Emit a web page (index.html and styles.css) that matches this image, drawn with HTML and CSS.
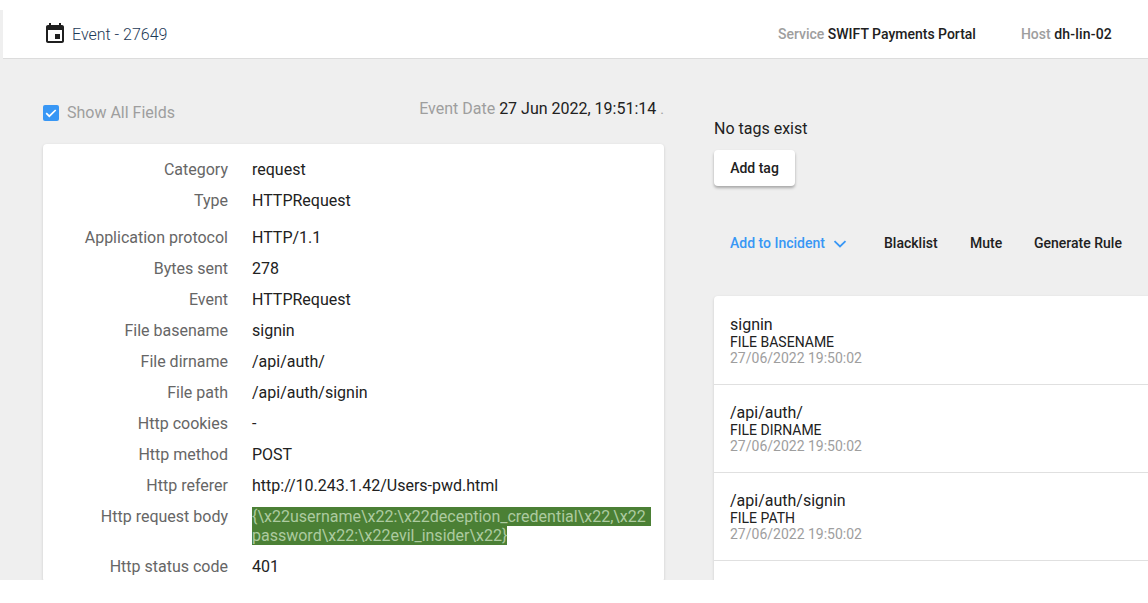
FILE: index.html
```html
<!DOCTYPE html>
<html lang="en">
<head>
    <meta charset="UTF-8">
    <title>Event - 27649</title>
    <link rel="stylesheet" href="styles.css">
</head>
<body>
    <div class="page">
        <header class="header">
            <div class="title">
                <svg class="title-icon" width="24" height="24" viewBox="0 0 24 24"><path fill="#1f1f1f" d="M17 12h-5v5h5v-5zM16 1v2H8V1H6v2H5c-1.11 0-1.99.9-1.99 2L3 19c0 1.1.89 2 2 2h14c1.1 0 2-.9 2-2V5c0-1.1-.9-2-2-2h-1V1h-2zm3 18H5V8h14v11z"/></svg>
                <span>Event - 27649</span>
            </div>
            <div class="meta">
                <span class="meta-item"><span class="muted">Service</span> SWIFT Payments Portal</span>
                <span class="meta-item"><span class="muted">Host</span> <span class="host-name">dh-lin-02</span></span>
            </div>
        </header>

        <main class="content">
            <section class="left">
                <div class="toolbar">
                    <label class="show-all">
                        <span class="checkbox">
                            <svg width="16" height="16" viewBox="0 0 16 16"><path fill="none" stroke="#fff" stroke-width="1.7" d="M3.2 8.2l3.1 3 6.4-6.2"/></svg>
                        </span>
                        Show All Fields
                    </label>
                    <div class="event-date"><span class="muted">Event Date</span> 27 Jun 2022, 19:51:14 <span class="muted dot">.</span></div>
                </div>

                <div class="card fields">
                    <div class="row"><div class="label">Category</div><div class="value">request</div></div>
                    <div class="row row-gap"><div class="label">Type</div><div class="value">HTTPRequest</div></div>
                    <div class="row"><div class="label">Application protocol</div><div class="value">HTTP/1.1</div></div>
                    <div class="row"><div class="label">Bytes sent</div><div class="value">278</div></div>
                    <div class="row"><div class="label">Event</div><div class="value">HTTPRequest</div></div>
                    <div class="row"><div class="label">File basename</div><div class="value">signin</div></div>
                    <div class="row"><div class="label">File dirname</div><div class="value">/api/auth/</div></div>
                    <div class="row"><div class="label">File path</div><div class="value">/api/auth/signin</div></div>
                    <div class="row"><div class="label">Http cookies</div><div class="value">-</div></div>
                    <div class="row"><div class="label">Http method</div><div class="value">POST</div></div>
                    <div class="row"><div class="label">Http referer</div><div class="value">http://10.243.1.42/Users-pwd.html</div></div>
                    <div class="row">
                        <div class="label">Http request body</div>
                        <div class="value">
                            <span class="highlight highlight-first">{\x22username\x22:\x22deception_credential\x22,\x22</span>
                            <span class="highlight">password\x22:\x22evil_insider\x22}</span>
                        </div>
                    </div>
                    <div class="row"><div class="label">Http status code</div><div class="value">401</div></div>
                </div>
            </section>

            <section class="right">
                <p class="no-tags">No tags exist</p>
                <button class="btn-tag">Add tag</button>

                <div class="actions">
                    <a class="action action-primary" href="#">Add to Incident
                        <svg width="14" height="8" viewBox="0 0 14 8"><path fill="none" stroke="#3897f5" stroke-width="1.8" d="M1.5 1.2L7 6.5l5.5-5.3"/></svg>
                    </a>
                    <a class="action action-blacklist" href="#">Blacklist</a>
                    <a class="action action-mute" href="#">Mute</a>
                    <a class="action" href="#">Generate Rule</a>
                </div>

                <div class="card indicators">
                    <div class="indicator">
                        <div class="ind-value">signin</div>
                        <div class="ind-type">FILE BASENAME</div>
                        <div class="ind-date">27/06/2022 19:50:02</div>
                    </div>
                    <div class="indicator">
                        <div class="ind-value">/api/auth/</div>
                        <div class="ind-type">FILE DIRNAME</div>
                        <div class="ind-date">27/06/2022 19:50:02</div>
                    </div>
                    <div class="indicator">
                        <div class="ind-value">/api/auth/signin</div>
                        <div class="ind-type">FILE PATH</div>
                        <div class="ind-date">27/06/2022 19:50:02</div>
                    </div>
                </div>
            </section>
        </main>
    </div>
</body>
</html>
```

FILE: styles.css
```css
html, body {
    margin: 0;
    height: 100%;
    overflow: hidden;
    background: #fff;
}
body {
    font-family: 'Roboto', sans-serif;
    font-size: 16px;
    color: #212121;
}
.page {
    margin-top: 10px;
    height: 570px;
    overflow: hidden;
    background: #efefef;
}
.muted {
    color: #9e9e9e;
}
.header {
    height: 48px;
    margin-left: 3px;
    padding: 0 36px 0 40px;
    display: flex;
    justify-content: space-between;
    align-items: center;
    background: #fff;
    border-bottom: 1px solid #dcdcdc;
}
.title {
    display: flex;
    align-items: center;
    gap: 5px;
    font-weight: 300;
    color: #1d3a57;
}
.meta {
    display: flex;
    gap: 45px;
    font-size: 14px;
    font-weight: 500;
}
.host-name {
    letter-spacing: 0.2px;
}
.content {
    display: flex;
    padding-left: 43px;
    gap: 50px;
}
.left {
    width: 621px;
    flex-shrink: 0;
}
.toolbar {
    height: 85px;
    display: flex;
    justify-content: space-between;
}
.show-all {
    margin-top: 44px;
    height: 19px;
    display: flex;
    align-items: center;
    gap: 8px;
    color: #9e9e9e;
}
.checkbox {
    width: 16px;
    height: 16px;
    display: flex;
    background: #3897f5;
    border-radius: 2px;
}
.event-date {
    margin-top: 40px;
    height: 19px;
}
.dot {
    font-size: 14px;
}
.card {
    background: #fff;
    border-radius: 4px;
    box-shadow: 0 1px 3px rgba(0, 0, 0, 0.15);
}
.fields {
    padding-top: 10px;
}
.row {
    display: flex;
    gap: 24px;
    line-height: 19px;
    padding: 6px 0;
}
.row-gap {
    padding-bottom: 12px;
}
.label {
    width: 185px;
    flex-shrink: 0;
    text-align: right;
    color: #666;
}
.highlight {
    display: block;
    width: fit-content;
    background: #4b8035;
    color: #adcba0;
}
.highlight-first {
    padding-right: 5px;
}
.right {
    flex: 1;
    min-width: 0;
    margin-right: -12px;
}
.no-tags {
    margin: 60px 0 12px;
    line-height: 19px;
}
.btn-tag {
    display: block;
    width: 81px;
    height: 36px;
    padding: 0;
    border: none;
    border-radius: 4px;
    background: #fff;
    color: #212121;
    font-family: inherit;
    font-size: 14px;
    font-weight: 500;
    box-shadow: 0 2px 3px rgba(0, 0, 0, 0.3);
}
.actions {
    margin-top: 48px;
    padding-left: 16px;
    height: 18px;
    display: flex;
    align-items: center;
    font-size: 14px;
    font-weight: 500;
}
.action {
    color: #212121;
    text-decoration: none;
}
.action-primary {
    width: 154px;
    color: #3897f5;
}
.action-primary svg {
    margin-left: 5px;
}
.action-blacklist {
    width: 86px;
}
.action-mute {
    width: 64px;
}
.indicators {
    margin-top: 44px;
    padding-top: 1px;
    min-height: 320px;
    border-radius: 4px 0 0 0;
}
.indicator {
    height: 88px;
    padding: 19px 16px 0;
    box-sizing: border-box;
    border-bottom: 1px solid #e0e0e0;
}
.ind-value {
    line-height: 18px;
}
.ind-type {
    font-size: 14px;
    line-height: 16px;
}
.ind-date {
    font-size: 14px;
    line-height: 16px;
    color: #9e9e9e;
}
```
